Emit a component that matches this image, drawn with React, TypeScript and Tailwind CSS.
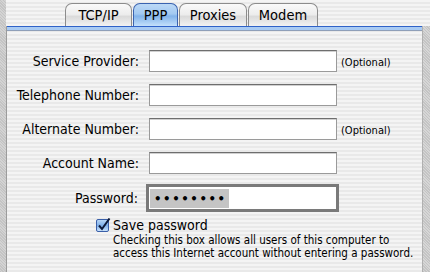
import React from 'react';

const font = "font-['DejaVu_Sans_Condensed','DejaVu_Sans',sans-serif]";

const tabs = [
  { label: 'TCP/IP', w: 'w-[67px]', active: false },
  { label: 'PPP', w: 'w-[45px]', active: true },
  { label: 'Proxies', w: 'w-[68px]', active: false },
  { label: 'Modem', w: 'w-[70px]', active: false },
];

const rows = [
  { label: 'Service Provider:', optional: true },
  { label: 'Telephone Number:', optional: false },
  { label: 'Alternate Number:', optional: true },
  { label: 'Account Name:', optional: false },
];

const Field: React.FC = () => (
  <div className="w-[188px] shrink-0 h-[22px] bg-white border border-[#9a9a9a] border-t-[#6e6e6e] shadow-[inset_0_1px_0_#d0d0d0]" />
);

const App: React.FC = () => {
  return (
    <div className={`w-[430px] h-[272px] flex overflow-hidden ${font} text-black whitespace-nowrap`}>
      {/* left window edge */}
      <div className="w-[6px] shrink-0 h-full bg-[#c9c9c9] bg-[repeating-linear-gradient(45deg,#c4c4c4_0px,#c4c4c4_1px,#d3d3d3_1px,#d3d3d3_2px)]" />

      <div className="flex-1 min-w-0 flex flex-col bg-[repeating-linear-gradient(to_bottom,#f4f4f4_0px,#f4f4f4_2px,#e9e9e9_2px,#e9e9e9_4px)]">
        {/* Tabs */}
        <div className="h-[26px] flex items-end pl-[59px] gap-[1px]">
          {tabs.map((t) => (
            <div
              key={t.label}
              className={`${t.w} h-[23px] rounded-t-[7px] border border-b-0 flex items-center justify-center text-[14.5px] pt-[1px] ${
                t.active
                  ? 'border-[#3a63b0] bg-[linear-gradient(to_bottom,#bcd9f7_0%,#a3c9f1_45%,#82b3ea_55%,#c4e0fb_100%)]'
                  : 'border-[#8c8c8c] bg-[linear-gradient(to_bottom,#fafafa_0%,#ececec_50%,#dadada_55%,#f2f2f2_100%)]'
              }`}
            >
              {t.label}
            </div>
          ))}
        </div>

        {/* Panel */}
        <div className="flex-1 border-l border-[#9c9c9c] flex flex-col">
          <div className="h-[5px] border-t border-[#2f62c8] bg-[#a9cbf3] border-b border-b-[#8f9fb8]" />
          <div className="flex flex-col pt-[19px] gap-[12px]">
            {rows.map((r) => (
              <div key={r.label} className="flex items-center">
                <div className="w-[142px] shrink-0 text-right text-[14px] pr-[10px]">{r.label}</div>
                <Field />
                {r.optional && <span className="ml-[4px] text-[11px] mt-[4px]">(Optional)</span>}
              </div>
            ))}
            <div className="flex items-center -mt-[2px]">
              <div className="w-[139px] shrink-0 text-right text-[14px] pr-[8px]">Password:</div>
              <div className="border-[3px] border-[#7a7a7a] bg-white w-[193px] shrink-0 h-[28px] flex items-center pl-[1px]">
                <span className="bg-[#c4c4c4] text-[13px] font-bold leading-[19px] tracking-[1.6px] pl-[4px] pr-[2px]">••••••••</span>
              </div>
            </div>
          </div>

          {/* Save password */}
          <div className="flex items-start pl-[89px] mt-[5px]">
            <svg width="15" height="15" viewBox="0 0 15 15" className="mt-[1px] shrink-0">
              <defs>
                <linearGradient id="cb" x1="0" y1="0" x2="0" y2="1">
                  <stop offset="0" stopColor="#bcd9f7" />
                  <stop offset="0.5" stopColor="#7fb0ea" />
                  <stop offset="1" stopColor="#cfe6fc" />
                </linearGradient>
              </defs>
              <rect x="0.5" y="1.5" width="12" height="12" rx="1.5" fill="url(#cb)" stroke="#3a5fa8" />
              <path d="M3 7.5 L6 11 L13.5 0.5" fill="none" stroke="#0d1a3a" strokeWidth="2" />
            </svg>
            <div className="ml-[2px]">
              <div className="text-[14px] leading-[16px]">Save password</div>
              <div className="text-[11.5px] leading-[13px] mt-[1px]">
                Checking this box allows all users of this computer to
                <br />
                access this Internet account without entering a password.
              </div>
            </div>
          </div>
        </div>
      </div>

      {/* right window edge */}
      <div className="w-[8px] shrink-0 h-full flex flex-col">
        <div className="h-[26px] bg-[repeating-linear-gradient(to_bottom,#f4f4f4_0px,#f4f4f4_2px,#e9e9e9_2px,#e9e9e9_4px)]" />
        <div className="flex-1 border-l border-[#b0b0b0] bg-[repeating-linear-gradient(45deg,#c4c4c4_0px,#c4c4c4_1px,#d6d6d6_1px,#d6d6d6_2px)]" />
      </div>
    </div>
  );
};

export default App;
